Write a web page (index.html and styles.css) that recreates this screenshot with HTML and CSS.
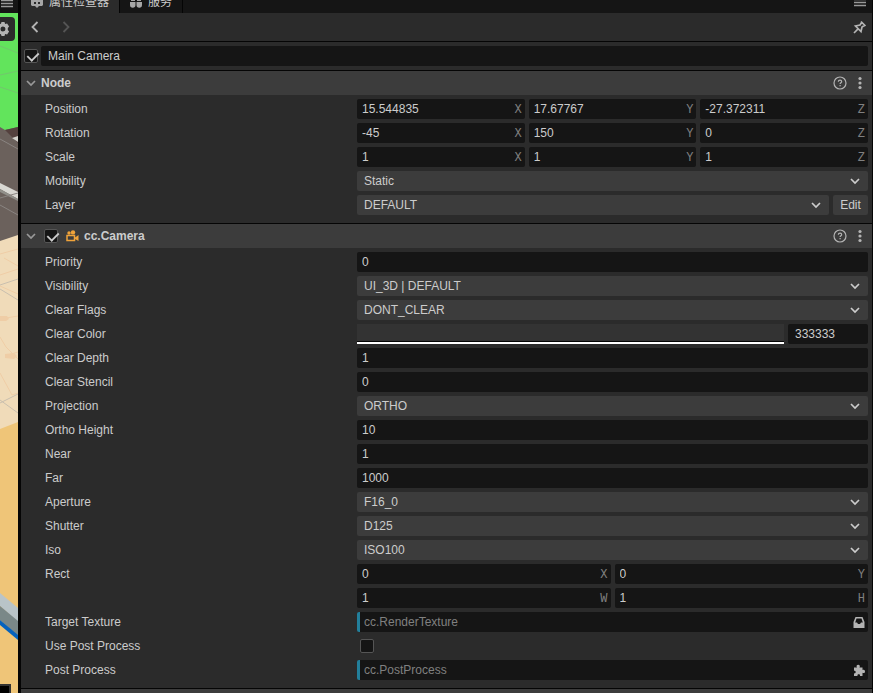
FILE: index.html
```
<!DOCTYPE html>
<html lang="en">
<head>
    <meta charset="UTF-8">
    <meta name="viewport" content="width=device-width, initial-scale=1.0">
    <title>Inspector</title>
    <link rel="stylesheet" href="styles.css">
</head>
<body>
    <!-- shared icons -->
    <svg class="sprite" aria-hidden="true">
        <symbol id="chevron" viewBox="0 0 12 12"><path d="M2 4l4 4 4-4" fill="none" stroke="currentColor" stroke-width="1.7"/></symbol>
        <symbol id="menu" viewBox="0 0 12 12"><path d="M0 4.500h12M0 7.500h12M0 10.500h12" stroke="currentColor" stroke-width="1.300"/></symbol>
        <symbol id="help" viewBox="0 0 14 14"><circle cx="7" cy="7" r="6" fill="none" stroke="currentColor" stroke-width="1.2"/><path d="M5.3 5.7c.1-2 3.4-2 3.4 0 0 1.1-1.6 1.1-1.6 2.3M7.1 8.9v1.3" fill="none" stroke="currentColor" stroke-width="1.2"/></symbol>
        <symbol id="dots" viewBox="0 0 4 14"><circle cx="2" cy="2.5" r="1.6"/><circle cx="2" cy="7" r="1.6"/><circle cx="2" cy="11.5" r="1.6"/></symbol>
    </svg>

    <aside class="scene">
        <div class="scene-bar"><svg class="menu-icon"><use href="#menu"/></svg></div>
        <div class="viewport">
            <svg class="world" viewBox="0 0 18 680" preserveAspectRatio="xMinYMin slice">
                <rect width="18" height="680" fill="#62e45c"/>
                <path d="M0 33l18 7M0 62l18-4M0 74l18 6" stroke="#72c66d" fill="none"/>
                <path d="M0 114l5 3 13-3v124H0z" fill="#6b615c"/>
                <path d="M5 117l13-3v16z" fill="#54413e"/>
                <path d="M12 125l6-2v6z" fill="#d2d1cb"/>
                <path d="M0 170l18 9v7L0 176z" fill="#d8d7d2"/>
                <path d="M0 176l18 10v2L0 179z" fill="#91908a"/>
                <path d="M0 126l18 10M0 185l18-5M0 192l18 10" stroke="#898481" fill="none"/>
                <path d="M0 228l18-6v200H0z" fill="#f0dbb9"/>
                <path d="M0 241l18-5M4 245l14 8M0 262l18-6M0 273l18 8M0 306l18-3M0 324l6 10 12 12M5 343l13-4M0 360l12 22 6-2" stroke="#efcda6" fill="none"/>
                <path d="M0 303h7l2 3-3 2H0zM5 341l9-1 3 3-3 3-9-1z" fill="#efcda6"/>
                <path d="M0 272l18-6M0 276l18 11M0 390l18-9M0 387l18 13" stroke="#c9bfae" fill="none"/>
                <path d="M0 416l18-7v271H0z" fill="#efc578"/>
                <path d="M0 580l18 15v14L0 593z" fill="#b9c4c8"/>
                <path d="M0 593l18 15v15L0 607z" fill="#7a8888"/>
                <path d="M0 607l18 15v5L0 612z" fill="#0562bd"/>
                <path d="M0 671h11v9H0z" fill="#333"/>
                <path d="M0 673h9v7H0z" fill="#000"/>
            </svg>
            <button class="gear" aria-label="Scene settings">
                <svg viewBox="0 0 14 14"><path fill="#b4b4b4" fill-rule="evenodd" d="M5.500 0h3l.6 2 2-.5 2 3L11.800 6v2l1.300 1.500-2 3-2-.5-.6 2h-3l-.6-2-2 .5-2-3L2.200 8V6L.9 4.500l2-3 2 .5zM7 4.500a2.500 2.500 0 100 5 2.500 2.500 0 000-5z"/></svg>
            </button>
        </div>
    </aside>

    <main class="inspector">
        <nav class="tabs">
            <button class="tab active">
                <svg viewBox="0 0 12 14"><path fill="#a6a6a6" fill-rule="evenodd" d="M1 1h10l1 1v8l-1 1H8l-2 2-2-2H1l-1-1V2zM3 7v2h2V7zm4 0v2h2V7z"/></svg>
                属性检查器
            </button>
            <button class="tab">
                <svg viewBox="0 0 12 14"><path fill="#a6a6a6" d="M1 1h4v5H1zM7 1h4v5H7zM0 7h5.500v3a2.700 2.700 0 01-5.500 0zM6.500 7H12v3a2.700 2.700 0 01-5.500 0z"/></svg>
                服务
            </button>
            <svg class="menu-icon"><use href="#menu"/></svg>
        </nav>

        <div class="toolbar">
            <button class="icon-btn back" aria-label="Back"><svg viewBox="0 0 14 14"><path d="M9.500 2l-5 5 5 5" fill="none" stroke="currentColor" stroke-width="1.800"/></svg></button>
            <button class="icon-btn forward" aria-label="Forward" disabled><svg viewBox="0 0 14 14"><path d="M4.500 2l5 5-5 5" fill="none" stroke="currentColor" stroke-width="1.800"/></svg></button>
            <button class="icon-btn pin" aria-label="Lock"><svg viewBox="0 0 14 14"><path d="M8 1.500l4.500 4.500M9 2L7 5 2.500 6 8 11.500 9 7l3-2M5.300 8.700L1 13" fill="none" stroke="currentColor" stroke-width="1.700"/></svg></button>
        </div>

        <div class="node-name">
            <input type="checkbox" aria-label="Active" checked>
            <input type="text" class="name" aria-label="Name" value="Main Camera">
        </div>

        <section>
            <header>
                <svg class="fold"><use href="#chevron"/></svg>
                <h2>Node</h2>
                <button class="icon-btn" aria-label="Help"><svg><use href="#help"/></svg></button>
                <button class="icon-btn more" aria-label="More"><svg><use href="#dots"/></svg></button>
            </header>
            <div class="props">
                <div class="prop">
                    <label for="posX">Position</label>
                    <div class="vec">
                        <div class="num"><input type="text" id="posX" value="15.544835"><span>X</span></div>
                        <div class="num"><input type="text" aria-label="Position Y" value="17.67767"><span>Y</span></div>
                        <div class="num"><input type="text" aria-label="Position Z" value="-27.372311"><span>Z</span></div>
                    </div>
                </div>
                <div class="prop">
                    <label for="rotX">Rotation</label>
                    <div class="vec">
                        <div class="num"><input type="text" id="rotX" value="-45"><span>X</span></div>
                        <div class="num"><input type="text" aria-label="Rotation Y" value="150"><span>Y</span></div>
                        <div class="num"><input type="text" aria-label="Rotation Z" value="0"><span>Z</span></div>
                    </div>
                </div>
                <div class="prop">
                    <label for="scaleX">Scale</label>
                    <div class="vec">
                        <div class="num"><input type="text" id="scaleX" value="1"><span>X</span></div>
                        <div class="num"><input type="text" aria-label="Scale Y" value="1"><span>Y</span></div>
                        <div class="num"><input type="text" aria-label="Scale Z" value="1"><span>Z</span></div>
                    </div>
                </div>
                <div class="prop">
                    <label for="mobility">Mobility</label>
                    <div class="select"><select id="mobility"><option>Static</option></select><svg><use href="#chevron"/></svg></div>
                </div>
                <div class="prop">
                    <label for="layer">Layer</label>
                    <div class="group">
                        <div class="select"><select id="layer"><option>DEFAULT</option></select><svg><use href="#chevron"/></svg></div>
                        <button class="edit">Edit</button>
                    </div>
                </div>
            </div>
        </section>

        <section>
            <header>
                <svg class="fold"><use href="#chevron"/></svg>
                <input type="checkbox" aria-label="Enable cc.Camera" checked>
                <svg class="camera" viewBox="0 0 13 12"><path d="M1 5.500h7.500v5H1z" fill="none" stroke="#f0a33a" stroke-width="1.500"/><path d="M9 7.500L12.500 5v6L9 9z" fill="#f0a33a"/><circle cx="3" cy="3" r="1.700" fill="#f0a33a"/><circle cx="7" cy="2.400" r="2.200" fill="#f0a33a"/></svg>
                <h2>cc.Camera</h2>
                <button class="icon-btn" aria-label="Help"><svg><use href="#help"/></svg></button>
                <button class="icon-btn more" aria-label="More"><svg><use href="#dots"/></svg></button>
            </header>
            <div class="props">
                <div class="prop">
                    <label for="priority">Priority</label>
                    <div class="num"><input type="text" id="priority" value="0"></div>
                </div>
                <div class="prop">
                    <label for="visibility">Visibility</label>
                    <div class="select"><select id="visibility"><option>UI_3D | DEFAULT</option></select><svg><use href="#chevron"/></svg></div>
                </div>
                <div class="prop">
                    <label for="clearFlags">Clear Flags</label>
                    <div class="select"><select id="clearFlags"><option>DONT_CLEAR</option></select><svg><use href="#chevron"/></svg></div>
                </div>
                <div class="prop">
                    <label for="clearColor">Clear Color</label>
                    <div class="group">
                        <button class="swatch" aria-label="Pick color"></button>
                        <input type="text" class="hex" id="clearColor" value="333333">
                    </div>
                </div>
                <div class="prop">
                    <label for="clearDepth">Clear Depth</label>
                    <div class="num"><input type="text" id="clearDepth" value="1"></div>
                </div>
                <div class="prop">
                    <label for="clearStencil">Clear Stencil</label>
                    <div class="num"><input type="text" id="clearStencil" value="0"></div>
                </div>
                <div class="prop">
                    <label for="projection">Projection</label>
                    <div class="select"><select id="projection"><option>ORTHO</option></select><svg><use href="#chevron"/></svg></div>
                </div>
                <div class="prop">
                    <label for="orthoHeight">Ortho Height</label>
                    <div class="num"><input type="text" id="orthoHeight" value="10"></div>
                </div>
                <div class="prop">
                    <label for="near">Near</label>
                    <div class="num"><input type="text" id="near" value="1"></div>
                </div>
                <div class="prop">
                    <label for="far">Far</label>
                    <div class="num"><input type="text" id="far" value="1000"></div>
                </div>
                <div class="prop">
                    <label for="aperture">Aperture</label>
                    <div class="select"><select id="aperture"><option>F16_0</option></select><svg><use href="#chevron"/></svg></div>
                </div>
                <div class="prop">
                    <label for="shutter">Shutter</label>
                    <div class="select"><select id="shutter"><option>D125</option></select><svg><use href="#chevron"/></svg></div>
                </div>
                <div class="prop">
                    <label for="iso">Iso</label>
                    <div class="select"><select id="iso"><option>ISO100</option></select><svg><use href="#chevron"/></svg></div>
                </div>
                <div class="prop">
                    <label for="rectX">Rect</label>
                    <div class="rect">
                        <div class="num"><input type="text" id="rectX" value="0"><span>X</span></div>
                        <div class="num"><input type="text" aria-label="Rect Y" value="0"><span>Y</span></div>
                        <div class="num"><input type="text" aria-label="Rect W" value="1"><span>W</span></div>
                        <div class="num"><input type="text" aria-label="Rect H" value="1"><span>H</span></div>
                    </div>
                </div>
                <div class="prop">
                    <label for="targetTexture">Target Texture</label>
                    <div class="asset">
                        <input type="text" id="targetTexture" placeholder="cc.RenderTexture">
                        <svg viewBox="0 0 12 12"><path fill="currentColor" fill-rule="evenodd" d="M2.500 1h7L11.500 6v6H.5V6zM3.500 2.500L2.200 6.500h1.800l1 1.500h2l1-1.500h1.800L8.500 2.500z"/></svg>
                    </div>
                </div>
                <div class="prop">
                    <label for="usePost">Use Post Process</label>
                    <div class="check"><input type="checkbox" id="usePost"></div>
                </div>
                <div class="prop">
                    <label for="postProcess">Post Process</label>
                    <div class="asset">
                        <input type="text" id="postProcess" placeholder="cc.PostProcess">
                        <svg viewBox="0 0 12 12"><path fill="currentColor" d="M1 3.500h3C3 2 3.800.8 5.200.8S7.400 2 6.500 3.500H9.500v2.500c1.400-.8 2.500 0 2.500 1.400s-1.100 2.200-2.500 1.400V12H7c.3-1.200-.3-1.800-1.300-1.800S4.200 10.800 4.500 12H1V9.300c1 .3 1.700-.3 1.700-1.200S2 6.500 1 6.800z"/></svg>
                    </div>
                </div>
            </div>
        </section>

        <section><header></header></section>
    </main>
</body>
</html>
```
FILE: styles.css
```
* {
    box-sizing: border-box;
}

body {
    margin: 0;
    height: 100vh;
    display: flex;
    overflow: hidden;
    background: #050505;
    color: #cccccc;
    font: 12px/20px "Liberation Sans", "Noto Sans CJK SC", sans-serif;
}

button, input, select {
    font: inherit;
    color: inherit;
    margin: 0;
    padding: 0;
    border: none;
    border-radius: 2px;
    background: none;
}

svg {
    display: block;
    flex: none;
}

.sprite {
    position: absolute;
    width: 0;
    height: 0;
}

/* scene strip on the left */
.scene {
    width: 18px;
    margin-right: 3px;
    flex: none;
    display: flex;
    flex-direction: column;
}

.scene-bar {
    height: 13px;
    flex: none;
    background: #151515;
    overflow: hidden;
}

.scene-bar .menu-icon {
    margin: -4px 0 0 1px;
}

.menu-icon {
    width: 12px;
    height: 12px;
    color: #999999;
}

.viewport {
    position: relative;
    flex: 1;
    min-height: 0;
    overflow: hidden;
}

.world {
    width: 100%;
    height: 100%;
}

.gear {
    position: absolute;
    top: 4px;
    left: -9px;
    width: 24px;
    height: 24px;
    padding: 5px;
    border-radius: 4px;
    background: #2b2b2b;
}

/* inspector */
.inspector {
    flex: 1;
    min-width: 0;
    margin-right: 1px;
    background: #2b2b2b;
}

.tabs {
    display: flex;
    align-items: center;
    height: 24px;
    margin-top: -11px;
    background: #151515;
}

.tab {
    display: flex;
    align-items: center;
    gap: 6px;
    height: 24px;
    padding: 2px 10px 0;
    border-right: 1px solid #050505;
    border-radius: 0;
}

.tab.active {
    background: #2b2b2b;
}

.tab svg {
    width: 12px;
    height: 14px;
}

.tabs .menu-icon {
    margin: 0 6px 0 auto;
}

.toolbar {
    display: flex;
    align-items: center;
    gap: 17px;
    height: 29px;
    padding: 0 5px 0 7px;
    border-bottom: 1px solid #050505;
}

.icon-btn {
    display: flex;
    align-items: center;
    justify-content: center;
    width: 14px;
    height: 14px;
    color: #b4b4b4;
    fill: currentColor;
}

.icon-btn svg {
    width: 14px;
    height: 14px;
}

.forward {
    color: #555555;
}

.pin {
    margin-left: auto;
}

.node-name {
    display: flex;
    align-items: center;
    gap: 3px;
    height: 28px;
    padding: 0 4px 0 3px;
}

.name {
    flex: 1;
    height: 20px;
    padding: 0 7px;
    background: #151515;
}

input[type="checkbox"] {
    appearance: none;
    flex: none;
    width: 14px;
    height: 14px;
    border: 1px solid #555555;
    background: #151515;
}

input[type="checkbox"]:checked::before {
    content: "";
    display: block;
    width: 10px;
    height: 6px;
    margin: 2px 0 0 1px;
    border: solid #cccccc;
    border-width: 0 0 2px 2px;
    transform: rotate(-45deg) scale(0.9);
    transform-origin: 50% 30%;
}

section {
    border-top: 1px solid #050505;
}

header {
    display: flex;
    align-items: center;
    height: 24px;
    padding: 0 4px;
    background: #3c3c3c;
}

header h2 {
    flex: 1;
    margin: 0;
    font-size: 12px;
}

header .icon-btn:last-child {
    margin-right: 1px;
}

.fold {
    width: 12px;
    height: 12px;
    margin-right: 4px;
    color: #999999;
}

header input[type="checkbox"] {
    margin: 0 8px 0 3px;
}

.camera {
    width: 13px;
    height: 12px;
    margin-right: 5px;
}

.more {
    margin-left: 6px;
}

.props {
    display: flex;
    flex-direction: column;
    gap: 4px;
    padding: 4px 4px 8px 24px;
}

.prop {
    display: grid;
    grid-template-columns: 312px minmax(0, 1fr);
}

.vec, .rect {
    display: grid;
    grid-template-columns: repeat(3, minmax(0, 1fr));
    gap: 4px;
}

.rect {
    grid-template-columns: repeat(2, minmax(0, 1fr));
}

.num, .asset {
    display: flex;
    align-items: center;
    height: 20px;
    border-radius: 2px;
    background: #151515;
}

.num input, .asset input {
    flex: 1;
    min-width: 0;
    height: 20px;
    padding-left: 5px;
}

.num span {
    padding: 2px 3px 0;
    color: #808080;
    font-family: "Liberation Mono", monospace;
}

.group {
    display: flex;
    gap: 4px;
}

.select {
    position: relative;
    flex: 1;
}

.select select {
    display: block;
    appearance: none;
    width: 100%;
    height: 20px;
    padding: 0 24px 0 7px;
    background: #3c3c3c;
}

.select svg {
    position: absolute;
    top: 4px;
    right: 7px;
    width: 12px;
    height: 12px;
    pointer-events: none;
}

.edit {
    width: 35px;
    height: 20px;
    background: #3c3c3c;
}

.swatch {
    flex: 1;
    height: 20px;
    border-radius: 0;
    border-bottom: 2px solid #ffffff;
    background: #333333;
    box-shadow: inset 0 -1px #050505;
}

.hex {
    width: 80px;
    height: 20px;
    padding: 0 7px;
    background: #151515;
}

.asset {
    padding-right: 3px;
    border-left: 3px solid #227f9b;
}

.asset input {
    padding-left: 4px;
}

.asset input::placeholder {
    color: #808080;
}

.asset svg {
    width: 12px;
    height: 12px;
    color: #b4b4b4;
}

.check {
    display: flex;
    align-items: center;
    height: 20px;
    padding-left: 3px;
}
```
